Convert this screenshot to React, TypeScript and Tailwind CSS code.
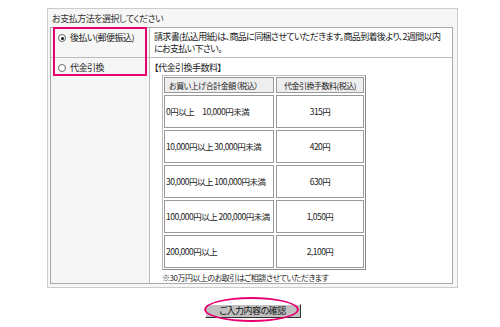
import React from 'react'

const fees = [
  { range: '0円以上　10,000円未満', fee: '315円' },
  { range: '10,000円以上 30,000円未満', fee: '420円' },
  { range: '30,000円以上 100,000円未満', fee: '630円' },
  { range: '100,000円以上 200,000円未満', fee: '1,050円' },
  { range: '200,000円以上', fee: '2,100円' },
]

function Radio({ checked }: { checked?: boolean }) {
  return (
    <span className="w-[8px] h-[8px] rounded-full border border-[#666] bg-white flex items-center justify-center shrink-0">
      {checked && <span className="w-[3px] h-[3px] rounded-full bg-[#111]" />}
    </span>
  )
}

export default function App() {
  return (
    <div
      className="relative w-[500px] h-[327px] bg-white text-[#222] text-[9px] leading-[11px] tracking-[-0.5px] [font-feature-settings:'palt']"
      style={{ fontFamily: '"Noto Sans CJK JP", "Liberation Sans", sans-serif' }}
    >
      <div className="pt-[8px] pl-[47px]">
        {/* 支払方法ボックス */}
        <div className="w-[411px] h-[280px] border border-[#ccc] bg-[#f6f6f6] flex flex-col">
          <div className="h-[20px] pl-[4px] flex items-center text-[#333]">お支払方法を選択してください</div>
          <div className="ml-[2px] w-[403px] flex-1 mb-[3px] border border-[#aaa] grid grid-cols-[99px_1fr] grid-rows-[30px_1fr]">
            <div className="bg-[#f6f6f6] border-r border-b border-[#bbb] flex items-start gap-[4px] pl-[7px] pt-[4px]">
              <span className="mt-[2px]"><Radio checked /></span>
              <span>後払い(郵便振込)</span>
            </div>
            <div className="bg-white border-b border-[#bbb] pl-[4px] pt-[3px] leading-[12px] tracking-[-0.65px] whitespace-nowrap">
              <div>請求書(払込用紙)は、商品に同梱させていただきます。商品到着後より、2週間以内</div>
              <div>にお支払い下さい。</div>
            </div>
            <div className="bg-[#f6f6f6] border-r border-[#bbb] flex items-start gap-[4px] pl-[7px] pt-[4px]">
              <span className="mt-[2px]"><Radio /></span>
              <span>代金引換</span>
            </div>
            <div className="bg-white pl-[4px] pt-[4px]">
              <div>【代金引換手数料】</div>
              <div className="ml-[8px] mt-[2px] w-[204px] border border-[#bbb] border-b-[#888] border-r-[#888] p-[1px] grid grid-cols-[110px_88px] grid-rows-[16px_repeat(5,33px)] gap-[2px] bg-white text-[8.5px] whitespace-nowrap">
                <div className="border border-[#999] bg-[#eee] flex items-center pl-[4px] text-[8px]">お買い上げ合計金額（税込）</div>
                <div className="border border-[#999] bg-[#eee] flex items-center justify-center text-[8px]">代金引換手数料(税込)</div>
                {fees.map((f) => (
                  <React.Fragment key={f.range}>
                    <div className="border border-[#999] flex items-center pl-[1px]">{f.range}</div>
                    <div className="border border-[#999] flex items-center justify-center">{f.fee}</div>
                  </React.Fragment>
                ))}
              </div>
              <div className="ml-[8px] mt-[2px] text-[8px]">※30万円以上のお取引はご相談させていただきます</div>
            </div>
          </div>
        </div>
        {/* 確認ボタン */}
        <div className="w-[411px] flex justify-center mt-[16px]">
          <button className="w-[96px] h-[14px] bg-[#c0c0c0] border border-t-white border-l-white border-b-[#333] border-r-[#333] text-[9px] leading-[12px] text-[#111] flex items-center justify-center">
            ご入力内容の確認
          </button>
        </div>
      </div>

      {/* ハイライト */}
      <div className="absolute left-[53px] top-[27px] w-[94px] h-[49px] border-[2px] border-[#e8006e]" />
      <div className="absolute left-[204px] top-[297px] w-[95px] h-[25px] rounded-[50%] border-[2px] border-[#e8006e]" />
    </div>
  )
}
